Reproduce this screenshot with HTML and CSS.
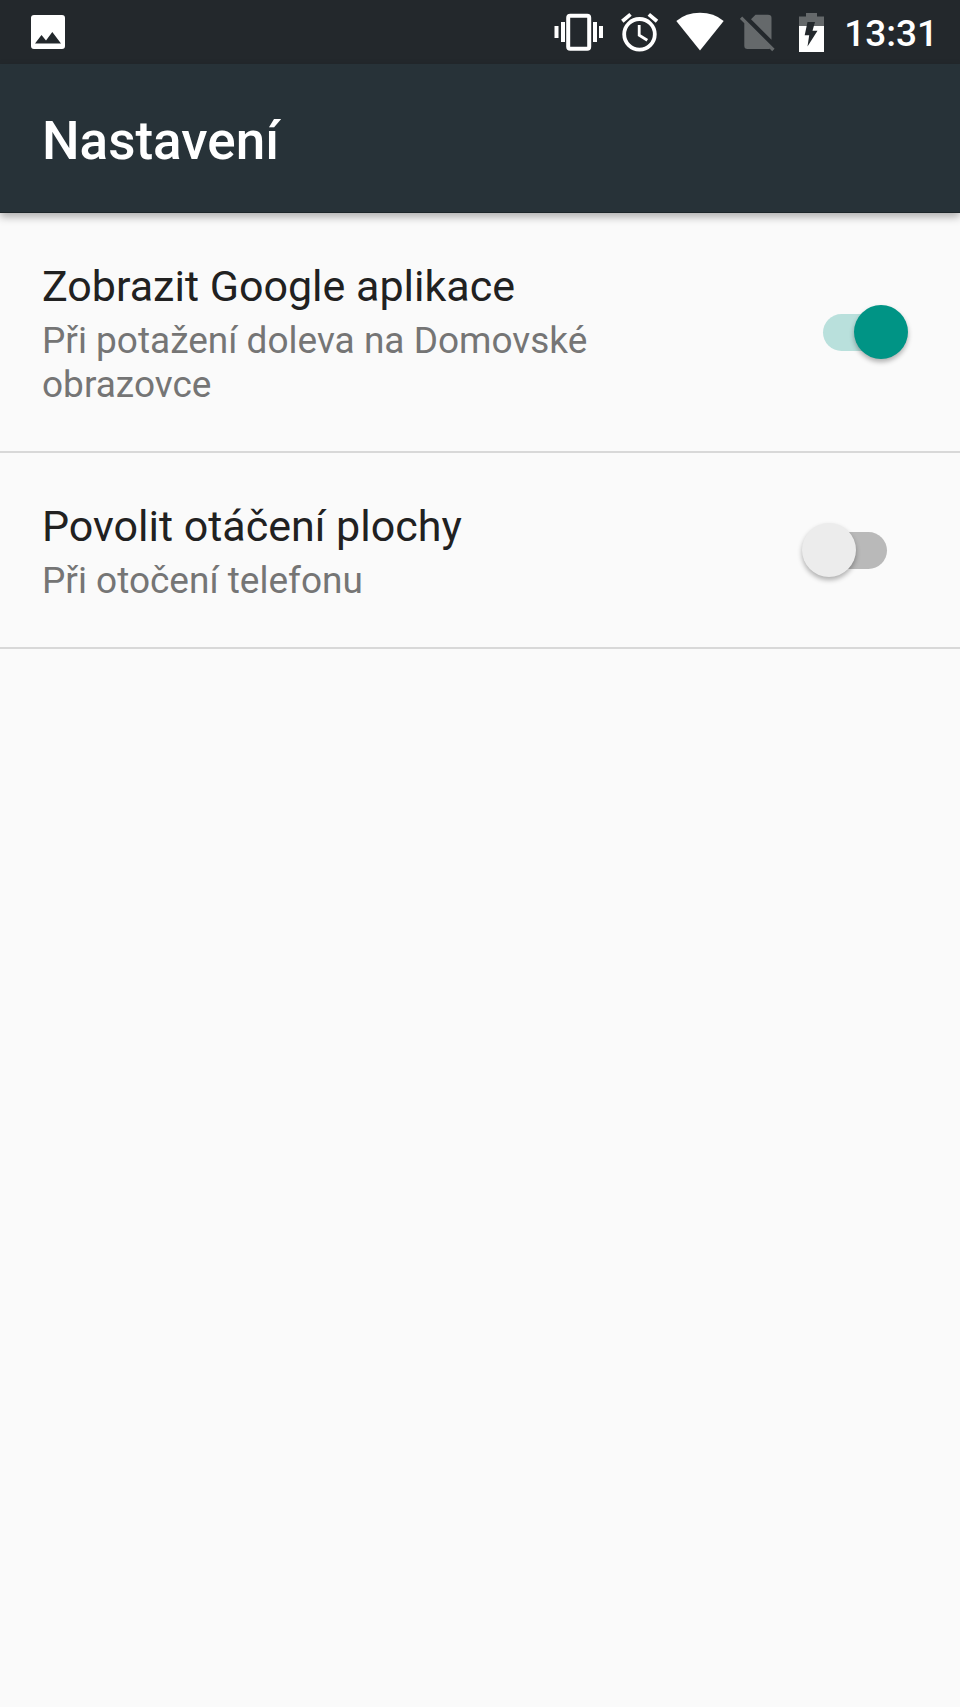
FILE: index.html
```html
<!DOCTYPE html>
<html lang="cs">
<head>
<meta charset="utf-8">
<meta name="viewport" content="width=device-width, initial-scale=1">
<title>Nastavení</title>
<link rel="stylesheet" href="styles.css">
</head>
<body>
<div class="status-bar">
  <svg class="icon" width="40" height="40" viewBox="28 12 40 40" aria-hidden="true">
    <path fill="#fff" fill-rule="evenodd" d="M34 15H62Q65 15 65 18V46Q65 49 62 49H34Q31 49 31 46V18Q31 15 34 15ZM35 43.5H61L52.3 32L46 40.5L41.5 35Z"/>
  </svg>
  <div class="status-icons">
    <svg class="icon" width="50" height="40" viewBox="554 12 50 40" aria-hidden="true">
      <rect x="568.2" y="15.7" width="21" height="33" rx="2" fill="none" stroke="#fff" stroke-width="4"/>
      <path fill="#fff" d="M554.5 26H558.5V38H554.5ZM561 22H565V42H561ZM593 22H597V42H593ZM599 26H603V38H599Z"/>
    </svg>
    <svg class="icon" width="40" height="40" viewBox="620 12 40 40" aria-hidden="true">
      <circle cx="639.5" cy="34.3" r="15.3" fill="none" stroke="#fff" stroke-width="3.8"/>
      <path fill="none" stroke="#fff" stroke-width="3.8" d="M622.3 21.2L630.5 14.4M657 21.2L648.8 14.4"/>
      <path fill="none" stroke="#fff" stroke-width="2.8" d="M639.2 25V35.2L647.3 40.2"/>
    </svg>
    <svg class="icon" width="48" height="40" viewBox="676 12 48 40" aria-hidden="true">
      <path fill="#fff" d="M700 50.5L676.3 21Q686 12.8 700 12.8Q714 12.8 723.7 21Z"/>
    </svg>
    <svg class="icon" width="40" height="40" viewBox="740 12 40 40" aria-hidden="true">
      <path fill="#65696b" d="M755.5 14.7H768Q771.5 14.7 771.5 18V39.8L751 19.3Z"/>
      <path fill="#65696b" d="M742.2 16.4L774.6 48.8L772.2 51.2L769.8 48.8Q769.2 49 768.5 49H747.5Q744.3 49 744.3 45.8V23.2L739.9 18.8Z"/>
    </svg>
    <svg class="icon" width="32" height="40" viewBox="796 12 32 40" aria-hidden="true">
      <path fill="#65696b" d="M799 16.5H806V13H817V16.5H824V26H799Z"/>
      <path fill="#fff" d="M799 26H824V52H799Z"/>
      <path fill="#23282c" d="M807.5 22H815L812.5 30.7H817.5L807.5 46.5L809.2 35.2H804.7Z"/>
    </svg>
    <time class="clock">13:31</time>
  </div>
</div>
<header class="app-bar">
  <h1 class="app-title">Nastavení</h1>
</header>
<main class="settings">
  <label class="setting">
    <span class="setting-text">
      <span class="setting-title">Zobrazit Google aplikace</span>
      <span class="setting-summary">Při potažení doleva na Domovské obrazovce</span>
    </span>
    <input class="switch" type="checkbox" role="switch" checked>
  </label>
  <label class="setting">
    <span class="setting-text">
      <span class="setting-title">Povolit otáčení plochy</span>
      <span class="setting-summary">Při otočení telefonu</span>
    </span>
    <input class="switch" type="checkbox" role="switch">
  </label>
</main>
</body>
</html>
```
FILE: styles.css
```css
* {
  box-sizing: border-box;
}

body {
  margin: 0;
  min-height: 100vh;
  background: #fafafa;
  color: #212121;
  font-family: Roboto, "Noto Sans", sans-serif;
}

.status-bar {
  display: flex;
  align-items: center;
  justify-content: space-between;
  height: 64px;
  padding: 0 22px 0 28px;
  background: #23282c;
  color: #fff;
}

.status-icons {
  display: flex;
  align-items: center;
  gap: 16px;
}

.icon {
  display: block;
  flex: none;
}

.clock {
  padding-top: 4px;
  font-size: 37px;
  font-weight: 500;
  line-height: 44px;
}

.app-bar {
  display: flex;
  align-items: center;
  min-height: 149px;
  padding: 6px 42px 0;
  background: #273238;
  border-bottom: 1px solid #1c2529;
  box-shadow: 0 4px 8px rgba(0, 0, 0, 0.3);
  color: #fff;
}

.app-title {
  margin: 0;
  font-size: 53px;
  font-weight: 500;
  line-height: 64px;
}

.setting {
  display: flex;
  align-items: center;
  gap: 48px;
  padding: 0 52px 0 42px;
  border-bottom: 2px solid #d8d8d8;
}

.setting-text {
  display: flex;
  flex: 1;
  flex-direction: column;
  gap: 8px;
  padding: 48px 0 44px;
}

.setting-title {
  font-size: 43px;
  line-height: 50px;
}

.setting-summary {
  color: #757575;
  font-size: 37px;
  line-height: 44px;
}

.switch {
  display: grid;
  flex: none;
  align-items: center;
  width: 106px;
  height: 54px;
  margin: 0;
  appearance: none;
}

.switch::before,
.switch::after {
  grid-area: 1 / 1;
  content: "";
}

.switch::before {
  justify-self: center;
  width: 64px;
  height: 37px;
  border-radius: 19px;
  background: #b9b9b9;
}

.switch::after {
  justify-self: start;
  width: 54px;
  height: 54px;
  border-radius: 50%;
  background: #ececec;
  box-shadow: 0 3px 5px rgba(0, 0, 0, 0.3);
}

.switch:checked::before {
  background: #b9e0dc;
}

.switch:checked::after {
  justify-self: end;
  background: #009485;
}
```
